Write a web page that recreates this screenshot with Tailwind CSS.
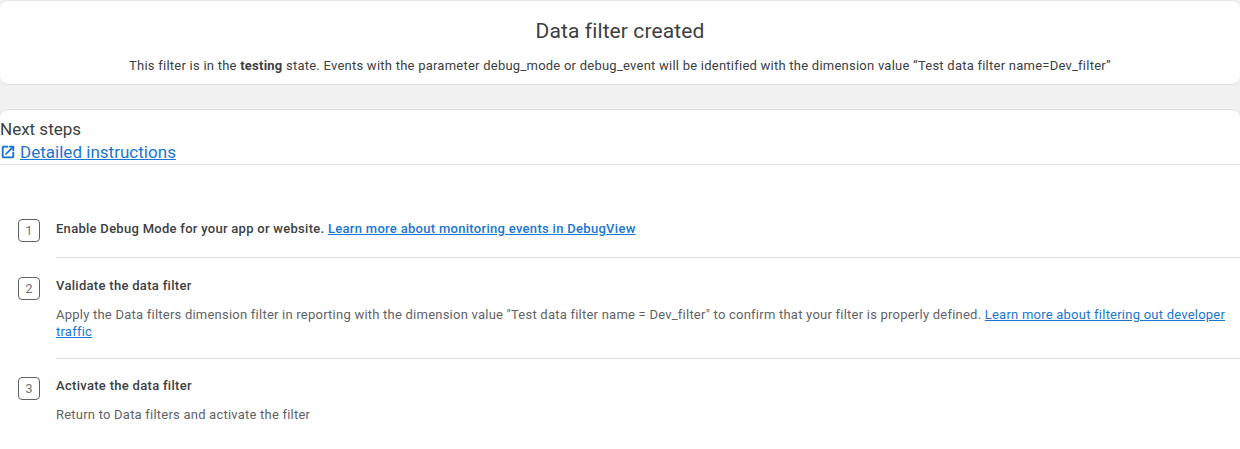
<!DOCTYPE html>
<html><head><meta charset="utf-8"><script src="https://cdn.jsdelivr.net/npm/@tailwindcss/browser@4"></script></head>
<body class="bg-[#f1f1f1] font-['Roboto',sans-serif] overflow-hidden">
<div class="w-[1240px] h-[449px] overflow-hidden">
<section class="h-[85px] bg-white rounded-lg border-t border-t-[#e8e8e8] border-b border-b-[#dadce0] flex flex-col items-center">
<h1 class="mt-[17px] text-[21px] leading-[26px] tracking-[0.1px] text-[#3c4043]">Data filter created</h1>
<p class="mt-[13px] text-[13px] leading-[18px] tracking-[0.24px] text-[#3c4043]">This filter is in the <b>testing</b> state. Events with the parameter debug_mode or debug_event will be identified with the dimension value “Test data filter name=Dev_filter”</p>
</section>
<section class="mt-[24px] bg-white rounded-t-lg border-t border-[#dadce0] h-[340px]">
<div class="h-[55px] border-b border-[#e0e0e0] pt-[9px]">
<div class="text-[17px] leading-[21px] text-[#3c4043]">Next steps</div>
<a class="flex items-center gap-[4px] text-[17px] leading-[24px] tracking-[0.02px] text-[#1976d2] underline">
<svg class="w-4 h-4" viewBox="0 0 24 24" fill="#1976d2" stroke="#1976d2" stroke-width="0.8"><path d="M19 19H5V5h7V3H5c-1.110 0-2 .9-2 2v14c0 1.100.89 2 2 2h14c1.100 0 2-.9 2-2v-7h-2v7zM14 3v2h3.590l-9.830 9.830 1.410 1.410L19 6.410V10h2V3h-7z"/></svg>Detailed instructions</a>
</div>
<ol class="pl-[18px] mt-[40px]">
<li class="flex"><span class="w-[22px] h-[23px] mt-[14px] border border-[#5f6368] rounded-[4px] text-[13px] text-[#757575] flex items-center justify-center">1</span>
<div class="ml-[16px] flex-1 h-[53px] border-b border-[#e0e0e0] pt-[14px] text-[13px] leading-[20px] tracking-[0.28px] font-medium text-[#3c4043]">Enable Debug Mode for your app or website. <a class="text-[#1976d2] underline tracking-[0.3px]">Learn more about monitoring events in DebugView</a></div></li>
<li class="flex"><span class="w-[22px] h-[23px] mt-[19px] border border-[#5f6368] rounded-[4px] text-[13px] text-[#757575] flex items-center justify-center">2</span>
<div class="ml-[16px] flex-1 h-[101px] border-b border-[#e0e0e0] pt-[19px] text-[13px] leading-[18px]"><div class="font-medium tracking-[0.3px] text-[#3c4043]">Validate the data filter</div><p class="mt-[11px] leading-[17px] tracking-[0.23px] text-[#5f6368]">Apply the Data filters dimension filter in reporting with the dimension value "Test data filter name = Dev_filter" to confirm that your filter is properly defined. <a class="text-[#1976d2] underline">Learn more about filtering out developer traffic</a></p></div></li>
<li class="flex"><span class="w-[22px] h-[23px] mt-[18px] border border-[#5f6368] rounded-[4px] text-[13px] text-[#757575] flex items-center justify-center">3</span>
<div class="ml-[16px] flex-1 pt-[18px] text-[13px] leading-[18px]"><div class="font-medium tracking-[0.3px] text-[#3c4043]">Activate the data filter</div><p class="mt-[11px] tracking-[0.22px] text-[#5f6368]">Return to Data filters and activate the filter</p></div></li>
</ol>
</section>
</div>
</body></html>
